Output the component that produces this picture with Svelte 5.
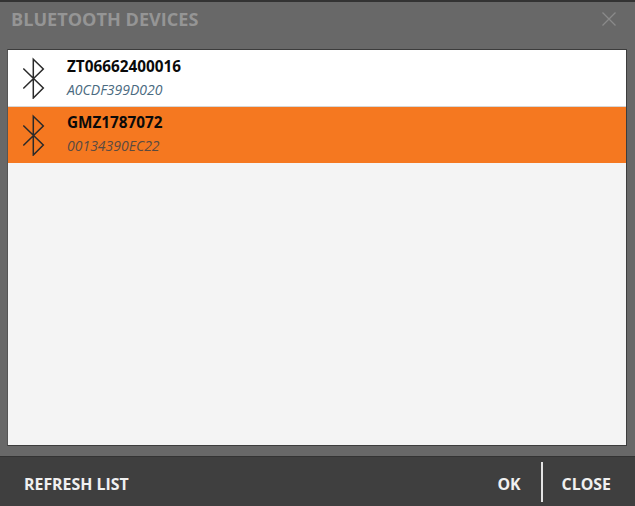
<script>
  const devices = [
    { name: 'ZT06662400016', mac: 'A0CDF399D020', selected: false },
    { name: 'GMZ1787072', mac: '00134390EC22', selected: true }
  ];
</script>

<div class="dialog">
  <header class="title-bar">
    <h1>BLUETOOTH DEVICES</h1>
    <button class="close-x" aria-label="Close">
      <svg width="14" height="14" viewBox="0 0 14 14">
        <path d="M0.5 0.5 L13.5 13.5 M13.500 0.5 L0.5 13.5" />
      </svg>
    </button>
  </header>

  <div class="list">
    {#each devices as device (device.mac)}
      <div class="row" class:selected={device.selected}>
        <svg class="bt" width="24" height="42" viewBox="0 0 24 42">
          <path d="M2.300 11.500 L22.300 31 L12.300 41 L12.300 2.300 L22.300 12 L2.300 31.500" />
        </svg>
        <div class="info">
          <div class="name">{device.name}</div>
          <div class="mac">{device.mac}</div>
        </div>
      </div>
    {/each}
  </div>

  <footer class="actions">
    <button class="action">REFRESH LIST</button>
    <div class="right">
      <button class="action">OK</button>
      <span class="divider"></span>
      <button class="action">CLOSE</button>
    </div>
  </footer>
</div>

<style>
  :global(body) {
    margin: 0;
    background: #686868;
  }

  .dialog {
    width: 635px;
    height: 506px;
    display: flex;
    flex-direction: column;
    background: #686868;
    border-top: 2px solid #333;
    box-sizing: border-box;
    font-family: "Open Sans", "Noto Sans", sans-serif;
    overflow: hidden;
  }

  .title-bar {
    height: 47px;
    flex: none;
    display: flex;
    align-items: flex-start;
    justify-content: space-between;
    padding: 0 19px 0 11px;
    box-sizing: border-box;
  }

  h1 {
    margin: 5px 0 0;
    font-size: 18.100px;
    line-height: 24px;
    font-weight: 700;
    color: #959595;
  }

  .close-x {
    margin-top: 10px;
    padding: 0;
    border: none;
    background: none;
    line-height: 0;
  }

  .close-x path {
    stroke: #8a8a8a;
    stroke-width: 1.300;
    fill: none;
  }

  .list {
    height: 397px;
    flex: none;
    margin: 0 8px 0 7px;
    background: #f4f4f4;
    border: 1px solid #3c3c3c;
    border-left-color: #555;
    box-sizing: border-box;
  }

  .row {
    height: 57px;
    display: flex;
    background: #fff;
    border-bottom: 1px solid #d6d6d6;
    box-sizing: border-box;
  }

  .row.selected {
    height: 56px;
    background: #f57820;
    border-bottom: none;
  }

  .bt {
    flex: none;
    margin: 7px 0 0 13px;
  }

  .bt path {
    stroke: #2a2a2a;
    stroke-width: 1.500;
    fill: none;
  }

  .info {
    margin: 0 0 0 22px;
    padding-top: 6px;
  }

  .selected .info {
    padding-top: 5px;
  }

  .name {
    font-size: 15.300px;
    line-height: 20px;
    font-weight: 700;
    color: #0a0a0a;
  }

  .mac {
    margin-top: 5px;
    font-size: 14px;
    line-height: 18px;
    font-style: italic;
    color: #4a6a80;
  }

  .selected .mac {
    color: #5a4a40;
  }

  .actions {
    flex: 1;
    margin-top: 10px;
    display: flex;
    align-items: center;
    justify-content: space-between;
    padding: 5px 24px 5px 24px;
    background: #3f3f3f;
    border-top: 1px solid #333;
    box-sizing: border-box;
  }

  .right {
    display: flex;
    align-items: center;
  }

  .action {
    padding: 4px 0 0;
    border: none;
    background: none;
    font-family: inherit;
    font-size: 15.900px;
    font-weight: 700;
    color: #f0f0f0;
  }

  .divider {
    width: 2px;
    height: 40px;
    margin: 0 19px 0 20px;
    background: #e4e4e4;
  }
</style>
